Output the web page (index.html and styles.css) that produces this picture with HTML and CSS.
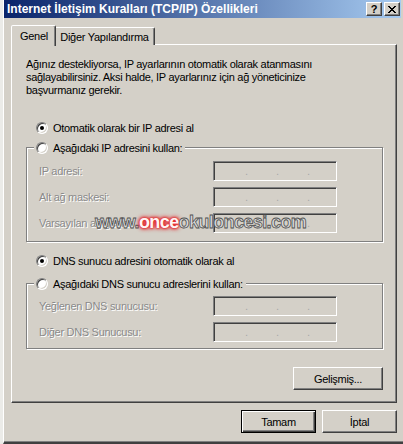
FILE: index.html
```html
<!DOCTYPE html>
<html lang="tr">
<head>
<meta charset="utf-8">
<title>Internet İletişim Kuralları (TCP/IP) Özellikleri</title>
<link rel="stylesheet" href="styles.css">
</head>
<body>
<div class="screen">
  <div class="backwin"></div>
  <div class="dialog">
    <div class="titlebar">
      <span class="title">Internet İletişim Kuralları (TCP/IP) Özellikleri</span>
      <div class="caption-btns">
        <span class="cbtn help">?</span>
        <span class="cbtn close"><svg width="8" height="7" viewBox="0 0 8 7"><path d="M0 0h2v1H0z M6 0h2v1H6z M1 1h2v1H1z M5 1h2v1H5z M2 2h4v1H2z M3 3h2v1H3z M2 4h4v1H2z M1 5h2v1H1z M5 5h2v1H5z M0 6h2v1H0z M6 6h2v1H6z" fill="#000"/></svg></span>
      </div>
    </div>
    <div class="body">
      <div class="tabs">
        <div class="tab active">Genel</div>
        <div class="tab">Diğer Yapılandırma</div>
      </div>
      <div class="panel">
        <p class="desc">Ağınız destekliyorsa, IP ayarlarının otomatik olarak atanmasını<br>sağlayabilirsiniz. Aksi halde, IP ayarlarınız için ağ yöneticinize<br>başvurmanız gerekir.</p>
        <div class="option first"><span class="radio on"></span>Otomatik olarak bir IP adresi al</div>
        <div class="group g1">
          <div class="legend"><span class="radio"></span>Aşağıdaki IP adresini kullan:</div>
          <div class="field"><span class="lbl">IP adresi:</span><span class="ipbox"><i>.</i><i>.</i><i>.</i></span></div>
          <div class="field"><span class="lbl">Alt ağ maskesi:</span><span class="ipbox"><i>.</i><i>.</i><i>.</i></span></div>
          <div class="field"><span class="lbl">Varsayılan ağ geçidi:</span><span class="ipbox"><i>.</i><i>.</i><i>.</i></span></div>
        </div>
        <div class="option second"><span class="radio on"></span>DNS sunucu adresini otomatik olarak al</div>
        <div class="group g2">
          <div class="legend"><span class="radio"></span>Aşağıdaki DNS sunucu adreslerini kullan:</div>
          <div class="field"><span class="lbl">Yeğlenen DNS sunucusu:</span><span class="ipbox"><i>.</i><i>.</i><i>.</i></span></div>
          <div class="field"><span class="lbl">Diğer DNS Sunucusu:</span><span class="ipbox"><i>.</i><i>.</i><i>.</i></span></div>
        </div>
        <div class="adv"><button class="btn wide">Gelişmiş...</button></div>
      </div>
      <div class="actions">
        <button class="btn default">Tamam</button>
        <button class="btn">İptal</button>
      </div>
    </div>
  </div>
  <div class="watermark">www.<span class="once">once</span>okuloncesi.com</div>
</div>
</body>
</html>
```
FILE: styles.css
```css
html, body {
  margin: 0;
  padding: 0;
}
body {
  width: 403px;
  height: 444px;
  overflow: hidden;
  background: #d4d0c8;
  font-family: "Liberation Sans", Arial, sans-serif;
  font-size: 11px;
  color: #000;
}
.screen {
  position: relative;
  display: flex;
  width: 403px;
  height: 444px;
}
.backwin {
  flex: none;
  width: 3px;
  background: #ebebe8;
}
.dialog {
  flex: 1;
  display: flex;
  flex-direction: column;
  box-sizing: border-box;
  height: 444px;
  border-left: 1px solid #fff;
  border-bottom: 2px solid #404040;
  box-shadow: inset 0 -1px #808080;
  background: #d4d0c8;
}
.titlebar {
  height: 18px;
  display: flex;
  align-items: center;
  justify-content: space-between;
  padding: 0 1px 0 3px;
  margin-right: 2px;
  background: linear-gradient(to right, #0a246a, #a6caf0);
}
.title {
  color: #fff;
  font-weight: bold;
  font-size: 12px;
  white-space: nowrap;
}
.caption-btns {
  display: flex;
  gap: 2px;
}
.cbtn {
  width: 16px;
  height: 14px;
  box-sizing: border-box;
  display: flex;
  align-items: center;
  justify-content: center;
  background: #d4d0c8;
  border: 1px solid;
  border-color: #fff #404040 #404040 #fff;
  box-shadow: inset -1px -1px #808080;
  font-weight: bold;
  font-size: 11px;
  line-height: 1;
}
.body {
  padding: 7px 6px 0 7px;
  letter-spacing: -0.3px;
}
.tabs {
  display: flex;
  height: 20px;
}
.tab {
  box-sizing: border-box;
  height: 18px;
  width: 101px;
  margin-top: 2px;
  display: flex;
  align-items: center;
  justify-content: center;
  border: 1px solid;
  border-bottom: none;
  border-color: #fff #404040 transparent #fff;
  border-radius: 2px 2px 0 0;
  box-shadow: inset -1px 0 #808080;
  background: #d4d0c8;
}
.tab.active {
  position: relative;
  z-index: 1;
  width: 45px;
  height: 21px;
  margin-top: 0;
  margin-right: -2px;
  justify-content: flex-start;
  padding-left: 8px;
}
.panel {
  margin-top: -1px;
  border: 1px solid;
  border-color: #fff #404040 #404040 #fff;
  box-shadow: inset -1px -1px #808080;
  padding: 0 13px 12px 14px;
}
.desc {
  margin: 13px 0 0;
  line-height: 13px;
}
.option {
  display: flex;
  align-items: center;
  height: 13px;
  margin-left: 10px;
}
.first { margin-top: 24px; }
.second { margin-top: 12px; }
.radio {
  flex: none;
  position: relative;
  width: 12px;
  height: 12px;
  box-sizing: border-box;
  margin-right: 5px;
  border-radius: 50%;
  border: 1px solid;
  border-color: #808080 #fff #fff #808080;
  background: #fff;
  box-shadow: inset 1px 1px #404040, inset -1px -1px #d4d0c8;
}
.radio.on::after {
  content: "";
  position: absolute;
  left: 3px;
  top: 3px;
  width: 4px;
  height: 4px;
  border-radius: 50%;
  background: #000;
}
.group {
  border: 1px solid #808080;
  box-shadow: inset 1px 1px #fff, 1px 1px #fff;
  padding: 0 0 8px 12px;
}
.g1 { margin-top: 13px; }
.g2 { margin-top: 16px; padding-bottom: 6px; }
.legend {
  display: flex;
  align-items: center;
  width: max-content;
  height: 13px;
  margin: -7px 0 0 -5px;
  padding: 0 3px 0 2px;
  background: #d4d0c8;
}
.field {
  display: flex;
  align-items: center;
  height: 20px;
  margin-top: 6px;
}
.g1 .legend + .field { margin-top: 7px; }
.lbl {
  width: 174px;
  color: #8a8a8a;
  text-shadow: 1px 1px #fff;
}
.ipbox {
  display: flex;
  align-items: flex-end;
  box-sizing: border-box;
  width: 124px;
  height: 20px;
  padding: 0 0 3px 31px;
  gap: 29px;
  border: 1px solid;
  border-color: #808080 #fff #fff #808080;
  box-shadow: inset 1px 1px #404040, inset -1px -1px #d4d0c8;
}
.ipbox i {
  font-style: normal;
  width: 2px;
  color: #a8a8a8;
  line-height: 1;
}
.adv {
  display: flex;
  justify-content: flex-end;
  margin-top: 18px;
}
.btn {
  font: inherit;
  letter-spacing: inherit;
  color: #000;
  width: 75px;
  height: 23px;
  box-sizing: border-box;
  padding: 0;
  background: #d4d0c8;
  border: 1px solid;
  border-color: #fff #404040 #404040 #fff;
  box-shadow: inset -1px -1px #808080;
}
.btn.wide { width: 90px; }
.btn.default {
  border: 1px solid #000;
  box-shadow: inset 1px 1px #fff, inset -1px -1px #404040, inset -2px -2px #808080;
}
.actions {
  display: flex;
  justify-content: flex-end;
  gap: 6px;
  margin-top: 7px;
}
.watermark {
  position: absolute;
  left: 95px;
  top: 213px;
  font-family: "Liberation Sans", Arial, sans-serif;
  font-weight: bold;
  font-size: 18px;
  line-height: 18px;
  letter-spacing: -0.6px;
  color: #dadada;
  -webkit-text-stroke: 0.8px #505050;
  white-space: nowrap;
}
.once {
  color: #fff4f4;
  -webkit-text-stroke: 0;
  text-shadow: 0 0 2px #e3262b, 0 0 3px #e3262b, 0 0 4px #e3262b, 0 0 5px #e3262b;
}
```
